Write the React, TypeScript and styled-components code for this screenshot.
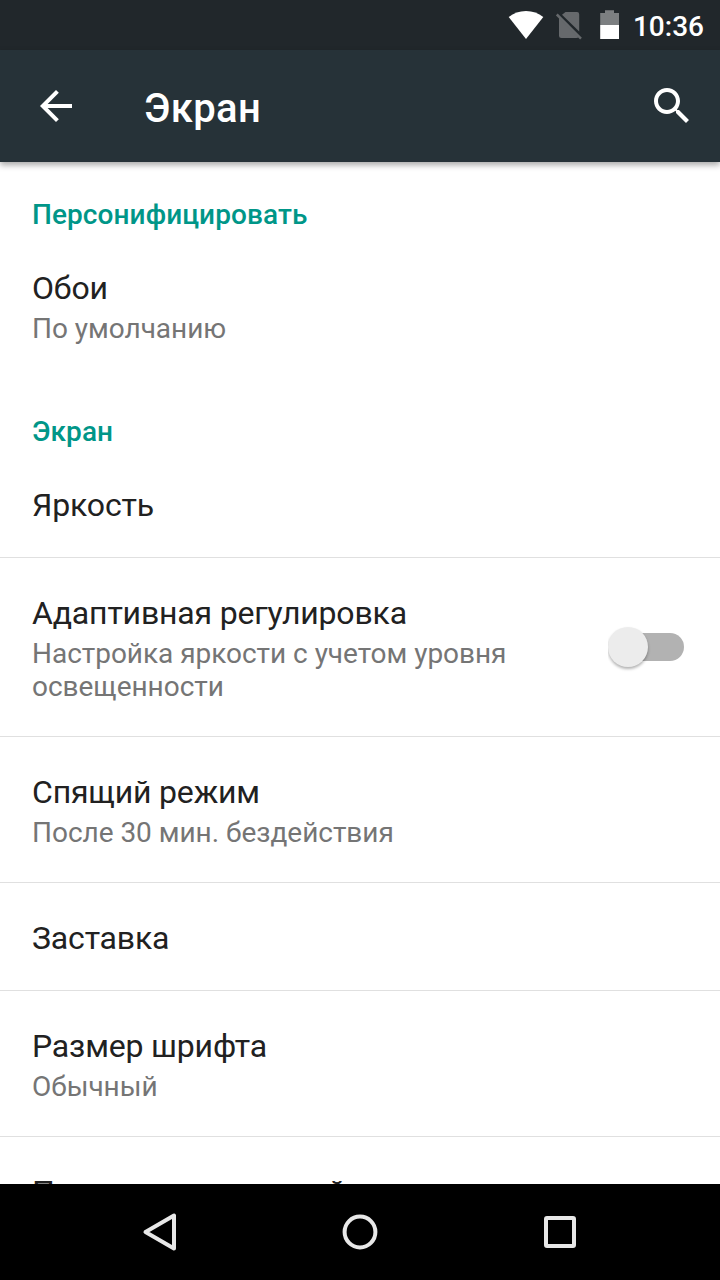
import React from 'react';
import styled, { createGlobalStyle } from 'styled-components';

const GlobalStyle = createGlobalStyle`
  * { box-sizing: border-box; }
  body { margin: 0; background: #fff; font-family: Roboto, sans-serif; }
`;

const Screen = styled.div`
  display: flex;
  flex-direction: column;
  width: 720px;
  height: 1280px;
  overflow: hidden;
  background: #fff;
`;

const StatusBar = styled.div`
  flex: none;
  display: flex;
  align-items: flex-start;
  justify-content: flex-end;
  height: 50px;
  padding-right: 16px;
  background: #21272b;
`;

const StatusIcon = styled.svg<{ $gap: number }>`
  display: block;
  flex: none;
  height: 50px;
  margin-right: ${(p) => p.$gap}px;
`;

const Clock = styled.span`
  color: #fff;
  font-size: 28px;
  font-weight: 500;
  line-height: 33px;
  padding-top: 10px;
`;

const Toolbar = styled.header`
  position: relative;
  z-index: 1;
  flex: none;
  display: flex;
  align-items: center;
  height: 112px;
  padding: 0 24px 0 32px;
  background: #263238;
  box-shadow: 0 3px 6px rgba(0, 0, 0, 0.34);
`;

const IconButton = styled.button`
  display: block;
  width: 48px;
  height: 48px;
  padding: 0;
  border: 0;
  background: none;
  color: #fff;

  svg { display: block; }
`;

const ToolbarTitle = styled.h1`
  flex: 1;
  margin: 0;
  padding: 5px 0 0 64px;
  color: #fff;
  font-size: 40px;
  font-weight: 500;
  line-height: 47px;
  letter-spacing: 0.35px;
`;

const Content = styled.main`
  flex: 1;
  min-height: 0;
  overflow: hidden;
`;

const Category = styled.h2`
  margin: 0;
  padding: 36px 32px 2px;
  color: #009688;
  font-size: 28px;
  font-weight: 500;
  line-height: 33px;
  letter-spacing: 0.08px;
`;

const Row = styled.div<{ $last?: boolean }>`
  display: flex;
  align-items: center;
  padding: 0 32px;
  border-bottom: 1px solid ${(p) => (p.$last ? 'transparent' : '#e0e0e0')};
`;

const RowText = styled.div`
  flex: 1;
  padding: 36px 0 33px;
`;

const RowTitle = styled.div<{ $alone: boolean }>`
  color: #212121;
  font-size: 32px;
  line-height: 38px;
  letter-spacing: -0.17px;
  white-space: nowrap;
  margin-bottom: ${(p) => (p.$alone ? 0 : 5)}px;
`;

const RowSummary = styled.div`
  color: #757575;
  font-size: 28px;
  line-height: 33px;
  letter-spacing: -0.03px;
`;

const SwitchTrack = styled.div`
  flex: none;
  display: flex;
  align-items: center;
  width: 72px;
  height: 28px;
  margin: 0 4px 0 32px;
  border-radius: 14px;
  background: #b2b2b2;
`;

const SwitchThumb = styled.div`
  flex: none;
  width: 40px;
  height: 40px;
  margin-left: -4px;
  border-radius: 50%;
  background: #ececec;
  box-shadow: 0 2px 3px rgba(0, 0, 0, 0.3);
  clip-path: inset(-6px -6px -6px 0);
`;

const NavBar = styled.nav`
  flex: none;
  display: flex;
  align-items: center;
  justify-content: center;
  gap: 152px;
  height: 96px;
  background: #000;
  color: #e8e8e8;

  svg { display: block; }
`;

type Item = { title: string; summary?: string; toggle?: boolean };

const groups: { name: string; items: Item[] }[] = [
  {
    name: 'Персонифицировать',
    items: [{ title: 'Обои', summary: 'По умолчанию' }],
  },
  {
    name: 'Экран',
    items: [
      { title: 'Яркость' },
      {
        title: 'Адаптивная регулировка',
        summary: 'Настройка яркости с учетом уровня освещенности',
        toggle: true,
      },
      { title: 'Спящий режим', summary: 'После 30 мин. бездействия' },
      { title: 'Заставка' },
      { title: 'Размер шрифта', summary: 'Обычный' },
      { title: 'При повороте устройства' },
    ],
  },
];

export default function App() {
  return (
    <Screen>
      <GlobalStyle />
      <StatusBar>
        <StatusIcon $gap={12} width="36" viewBox="0 0 36 50">
          <path d="M.7 17Q8 11 18 11T35.3 17L18 39Z" fill="#fff" />
        </StatusIcon>
        <StatusIcon $gap={18} width="26" viewBox="0 0 26 50">
          <path d="M9.5 12H21a2.200 2.200 0 0 1 2.200 2.200V31.500L6 14.800Z" fill="#66696c" />
          <path d="M3 17.500L22.500 37Q22 38 20.500 38H5.500A2.500 2.500 0 0 1 3 35.500Z" fill="#66696c" />
          <path d="M.8 14.500L25 38.700" stroke="#66696c" strokeWidth="2.500" />
        </StatusIcon>
        <StatusIcon $gap={13} width="20" viewBox="0 0 20 50">
          <path d="M.2 25V13H5V10.200H14V13H19V25Z" fill="#7c7f81" />
          <path d="M.2 25H19V39H.2Z" fill="#fff" />
        </StatusIcon>
        <Clock>10:36</Clock>
      </StatusBar>
      <Toolbar>
        <IconButton aria-label="Назад">
          <svg width="48" height="48" viewBox="0 0 24 24" fill="currentColor">
            <path d="M20 11H7.830l5.590-5.590L12 4l-8 8 8 8 1.410-1.410L7.830 13H20v-2z" />
          </svg>
        </IconButton>
        <ToolbarTitle>Экран</ToolbarTitle>
        <IconButton aria-label="Поиск">
          <svg width="48" height="48" viewBox="0 0 24 24" fill="currentColor">
            <path d="M15.500 14h-.790l-.280-.270C15.410 12.590 16 11.110 16 9.500 16 5.910 13.090 3 9.500 3S3 5.910 3 9.500 5.910 16 9.500 16c1.610 0 3.090-.590 4.230-1.570l.270.280v.790l5 4.990L20.490 19l-4.990-5zm-6 0C7.010 14 5 11.990 5 9.500S7.010 5 9.500 5 14 7.010 14 9.500 11.990 14 9.500 14z" />
          </svg>
        </IconButton>
      </Toolbar>
      <Content>
        {groups.map((group) => (
          <section key={group.name}>
            <Category>{group.name}</Category>
            {group.items.map((item, i) => (
              <Row key={item.title} $last={i === group.items.length - 1}>
                <RowText>
                  <RowTitle $alone={!item.summary}>{item.title}</RowTitle>
                  {item.summary && <RowSummary>{item.summary}</RowSummary>}
                </RowText>
                {item.toggle && (
                  <SwitchTrack role="switch" aria-checked="false">
                    <SwitchThumb />
                  </SwitchTrack>
                )}
              </Row>
            ))}
          </section>
        ))}
      </Content>
      <NavBar>
        <svg width="48" height="48" viewBox="0 0 48 48" fill="none" stroke="currentColor" strokeWidth="4" strokeLinejoin="round">
          <path d="M38 7.500V40.500L9.500 24Z" />
        </svg>
        <svg width="48" height="48" viewBox="0 0 48 48" fill="none" stroke="currentColor" strokeWidth="4">
          <circle cx="24" cy="24" r="15.400" />
        </svg>
        <svg width="48" height="48" viewBox="0 0 48 48" fill="none" stroke="currentColor" strokeWidth="4" strokeLinejoin="round">
          <rect x="10" y="10" width="28" height="28" rx="1" />
        </svg>
      </NavBar>
    </Screen>
  );
}
